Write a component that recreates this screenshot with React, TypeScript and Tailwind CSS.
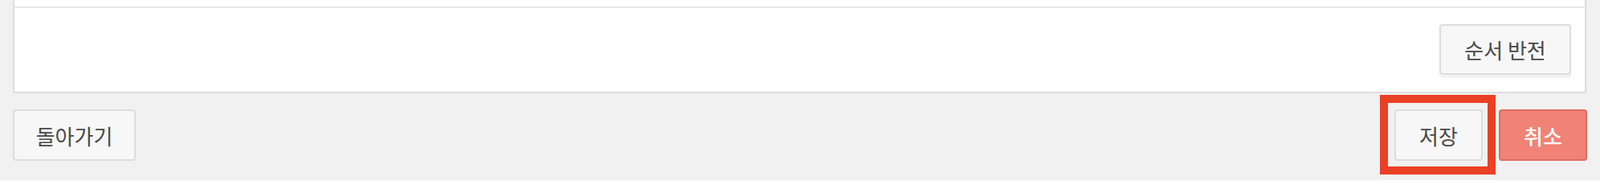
import React from 'react';

const font = { fontFamily: '"Noto Sans CJK KR", "Noto Sans", sans-serif' };

export default function App() {
  return (
    <div className="h-[224px] w-full overflow-hidden bg-[#f1f1f1] pl-[16px] pr-[17px]" style={font}>
      {/* Panel (top cut off) */}
      <div className="border-x-2 border-b-2 border-[#dddddd] bg-white">
        <div className="h-[8px]" />
        <div className="h-[2px] bg-[#e8e8e8]" />
        <div className="flex justify-end pt-[20px] pb-[21px] pr-[17px]">
          <button className="h-[63px] w-[164px] rounded-[4px] border-2 border-[#dddddd] bg-[#f7f7f7] text-[26px] text-[#484848] shadow-[0_4px_0_#f2f2f2]">
            순서 반전
          </button>
        </div>
      </div>

      {/* Footer buttons */}
      <div className="mt-[20px] flex items-start justify-between">
        <button className="h-[64px] w-[153px] rounded-[4px] border-2 border-[#dddddd] bg-[#f7f7f7] text-[26px] text-[#484848]">
          돌아가기
        </button>
        <div className="flex gap-[20px]">
          <div className="relative">
            <button className="h-[64px] w-[110px] rounded-[4px] border-2 border-[#dddddd] bg-[#f7f7f7] text-[26px] text-[#484848]">
              저장
            </button>
            <div className="pointer-events-none absolute -left-[18px] -top-[18px] h-[99px] w-[144px] border-[10px] border-[#ea4025]" />
          </div>
          <button className="-mr-[1px] h-[64px] w-[110px] rounded-[4px] border-2 border-[#e06b61] bg-[#f08276] text-[26px] font-medium text-white">
            취소
          </button>
        </div>
      </div>
    </div>
  );
}
